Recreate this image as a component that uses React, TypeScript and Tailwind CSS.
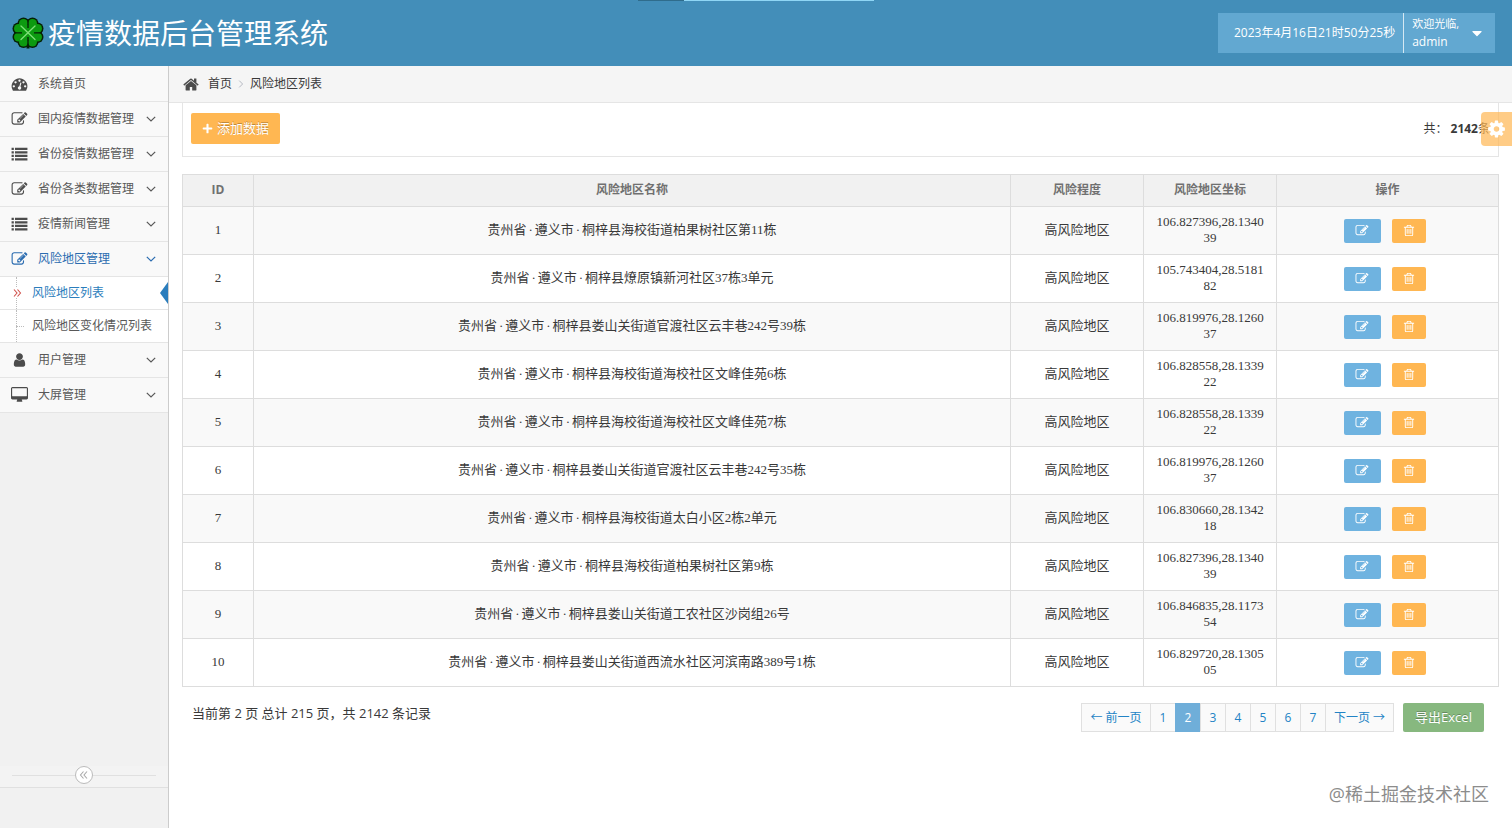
import { Fragment, type ReactNode } from 'react';
import { FaPlus, FaCaretDown } from 'react-icons/fa';
import clsx from 'clsx';

const ICONS = {
    edit: 'M888 1184l116-116-152-152-116 116v56h96v96h56zm440-720q-16-16-33 1l-350 350q-17 17-1 33t33-1l350-350q17-17 1-33zm80 594v190q0 119-84.5 203.5t-203.5 84.5h-832q-119 0-203.5-84.5t-84.5-203.5v-832q0-119 84.5-203.5t203.5-84.5h832q63 0 117 25 15 7 18 23 3 17-9 29l-49 49q-14 14-32 8-23-6-45-6h-832q-66 0-113 47t-47 113v832q0 66 47 113t113 47h832q66 0 113-47t47-113v-126q0-13 9-22l64-64q15-15 35-7t20 29zm-96-738l288 288-672 672h-288v-288zm444 132l-92 92-288-288 92-92q28-28 68-28t68 28l152 152q28 28 28 68t-28 68z',
    trash: 'M704 736v576q0 14-9 23t-23 9h-64q-14 0-23-9t-9-23v-576q0-14 9-23t23-9h64q14 0 23 9t9 23zm256 0v576q0 14-9 23t-23 9h-64q-14 0-23-9t-9-23v-576q0-14 9-23t23-9h64q14 0 23 9t9 23zm256 0v576q0 14-9 23t-23 9h-64q-14 0-23-9t-9-23v-576q0-14 9-23t23-9h64q14 0 23 9t9 23zm128 724v-948h-896v948q0 22 7 40.5t14.5 27 10.5 8.5h832q3 0 10.5-8.5t14.5-27 7-40.5zm-672-1076h448l-48-117q-7-9-17-11h-317q-10 2-17 11zm928 32v64q0 14-9 23t-23 9h-96v948q0 83-47 143.5t-113 60.5h-832q-66 0-113-58.5t-47-141.5v-952h-96q-14 0-23-9t-9-23v-64q0-14 9-23t23-9h309l70-167q15-37 54-63t79-26h320q40 0 79 26t54 63l70 167h309q14 0 23 9t9 23z',
    dashboard: 'M384 1152q0-53-37.5-90.5t-90.5-37.5-90.5 37.5-37.5 90.5 37.5 90.5 90.5 37.5 90.5-37.5 37.5-90.5zm192-448q0-53-37.5-90.5t-90.5-37.5-90.5 37.5-37.5 90.5 37.5 90.5 90.5 37.5 90.5-37.5 37.5-90.5zm428 481l101-382q6-26-7.5-48.5t-38.5-29.5-48 6.5-30 39.5l-101 382q-60 5-107 43.5t-63 98.5q-20 77 20 146t117 89 146-20 89-117q16-60-6-117t-72-91zm660-33q0-53-37.5-90.5t-90.5-37.5-90.5 37.5-37.5 90.5 37.5 90.5 90.5 37.5 90.5-37.5 37.5-90.5zm-640-640q0-53-37.5-90.5t-90.5-37.5-90.5 37.5-37.5 90.5 37.5 90.5 90.5 37.5 90.5-37.5 37.5-90.5zm448 192q0-53-37.5-90.5t-90.5-37.5-90.5 37.5-37.5 90.5 37.5 90.5 90.5 37.5 90.5-37.5 37.5-90.5zm320 448q0 261-141 483-19 29-54 29h-1402q-35 0-54-29-141-221-141-483 0-182 71-348t191-286 286-191 348-71 348 71 286 191 191 286 71 348z',
    list: 'M0 190h256v250h-256zM384 190h1408v250h-1408zM0 590h256v250h-256zM384 590h1408v250h-1408zM0 990h256v250h-256zM384 990h1408v250h-1408zM0 1390h256v250h-256zM384 1390h1408v250h-1408z',
    home: 'M1472 992v480q0 26-19 45t-45 19h-384v-384h-256v384h-384q-26 0-45-19t-19-45v-480q0-1 .5-3t.5-3l575-474 575 474q1 2 1 6zm223-69l-62 74q-8 9-21 11h-3q-13 0-21-7l-692-577-692 577q-12 8-24 7-13-2-21-11l-62-74q-8-10-7-23.5t11-21.5l719-599q32-26 76-26t76 26l244 204v-195q0-14 9-23t23-9h192q14 0 23 9t9 23v408l219 182q10 8 11 21.5t-7 23.5z',
    user: 'M1536 1399q0 109-62.5 187t-150.5 78h-854q-88 0-150.5-78t-62.5-187q0-85 8.5-160.5t31.5-152 58.5-131 94-89 134.5-34.5q131 128 313 128t313-128q76 0 134.5 34.5t94 89 58.5 131 31.5 152 8.5 160.5zm-256-887q0 159-112.5 271.5t-271.5 112.5-271.5-112.5-112.5-271.5 112.5-271.5 271.5-112.5 271.5 112.5 112.5 271.5z',
    desktop: 'M1728 992v-832q0-13-9.5-22.5t-22.5-9.5h-1600q-13 0-22.5 9.5t-9.5 22.5v832q0 13 9.5 22.5t22.5 9.5h1600q13 0 22.5-9.5t9.5-22.5zm128-832v1088q0 66-47 113t-113 47h-544q0 37 16 77.5t32 71 16 43.5q0 26-19 45t-45 19h-512q-26 0-45-19t-19-45q0-14 16-44t32-70 16-78h-544q-66 0-113-47t-47-113v-1088q0-66 47-113t113-47h1600q66 0 113 47t47 113z',
    cog: 'M1152 896q0-106-75-181t-181-75-181 75-75 181 75 181 181 75 181-75 75-181zm512-109v222q0 12-8 23t-20 13l-185 28q-19 54-39 91 35 50 107 138 10 12 10 25t-9 23q-27 37-99 108t-94 71q-12 0-26-9l-138-108q-44 23-91 38-16 136-29 186-7 28-36 28h-222q-14 0-24.5-8.5t-11.5-21.5l-28-184q-49-16-90-37l-141 107q-10 9-25 9-14 0-25-11-126-114-165-168-7-10-7-23 0-12 8-23 15-21 51-66.5t54-70.5q-27-50-41-99l-183-27q-13-2-21-12.5t-8-23.5v-222q0-12 8-23t19-13l186-28q14-46 39-92-40-57-107-138-10-12-10-24 0-10 9-23 26-36 98.5-107.5t94.5-71.5q13 0 26 10l138 107q44-23 91-38 16-136 29-186 7-28 36-28h222q14 0 24.5 8.5t11.5 21.5l28 184q49 16 90 37l142-107q9-9 24-9 13 0 25 10 129 119 165 170 7 8 7 22 0 12-8 23-15 21-51 66.5t-54 70.5q26 50 41 98l183 28q13 2 21 12.5t8 23.5z',
};

type IconName = keyof typeof ICONS;

const Icon = ({ name, className }: { name: IconName; className?: string }) => (
    <svg viewBox="-64 0 1920 1792" fill="currentColor" className={clsx('shrink-0', className)} aria-hidden="true">
        <path d={ICONS[name]} />
    </svg>
);

const Chevron = ({ className }: { className?: string }) => (
    <svg viewBox="0 0 10 10" fill="none" stroke="currentColor" strokeWidth="1.2" className={className} aria-hidden="true">
        <path d="M.8 2.8 5 7l4.2-4.2" />
    </svg>
);

const DoubleAngle = ({ className }: { className?: string }) => (
    <svg viewBox="0 0 10 10" fill="none" stroke="currentColor" strokeWidth="1.1" className={className} aria-hidden="true">
        <path d="M2 1.500 5 5 2 8.500M5.500 1.500 8.500 5 5.500 8.500" />
    </svg>
);

// eight round lobes, outlined, two per leaf
const LOBES = [
    [11.5, 6.5], [20.5, 6.5], [6.5, 11.5], [25.5, 11.5],
    [6.5, 20], [25.5, 20], [11.5, 25], [20.5, 25],
];

const Clover = () => (
    <svg viewBox="0 0 32 32" className="h-8 w-8 shrink-0" aria-hidden="true">
        <g fill="#062006">
            {LOBES.map(([x, y]) => <circle key={`${x}-${y}`} cx={x} cy={y} r="6" />)}
            <path d="M14.500 22h3v9.500h-3z" />
        </g>
        <g fill="#0c9a10">
            {LOBES.map(([x, y]) => <circle key={`${x}-${y}`} cx={x} cy={y} r="4.500" />)}
            <path d="M8 8h16v15H8z" />
        </g>
        <path d="M16 3v8M16 20v11M2 15.800h8M22 15.800h8" stroke="#062006" strokeWidth="1.300" />
        <path d="M9 9l14 13.500M23 9L9 22.500" stroke="#7fe07a" strokeWidth="1.300" strokeLinecap="round" />
    </svg>
);

const menu: { label: string; icon: IconName; plain?: boolean; children?: string[] }[] = [
    { label: '系统首页', icon: 'dashboard', plain: true },
    { label: '国内疫情数据管理', icon: 'edit' },
    { label: '省份疫情数据管理', icon: 'list' },
    { label: '省份各类数据管理', icon: 'edit' },
    { label: '疫情新闻管理', icon: 'list' },
    { label: '风险地区管理', icon: 'edit', children: ['风险地区列表', '风险地区变化情况列表'] },
    { label: '用户管理', icon: 'user' },
    { label: '大屏管理', icon: 'desktop' },
];

const rows = [
    { id: 1, name: '贵州省·遵义市·桐梓县海校街道柏果树社区第11栋', pos: '106.827396,28.134039' },
    { id: 2, name: '贵州省·遵义市·桐梓县燎原镇新河社区37栋3单元', pos: '105.743404,28.518182' },
    { id: 3, name: '贵州省·遵义市·桐梓县娄山关街道官渡社区云丰巷242号39栋', pos: '106.819976,28.126037' },
    { id: 4, name: '贵州省·遵义市·桐梓县海校街道海校社区文峰佳苑6栋', pos: '106.828558,28.133922' },
    { id: 5, name: '贵州省·遵义市·桐梓县海校街道海校社区文峰佳苑7栋', pos: '106.828558,28.133922' },
    { id: 6, name: '贵州省·遵义市·桐梓县娄山关街道官渡社区云丰巷242号35栋', pos: '106.819976,28.126037' },
    { id: 7, name: '贵州省·遵义市·桐梓县海校街道太白小区2栋2单元', pos: '106.830660,28.134218' },
    { id: 8, name: '贵州省·遵义市·桐梓县海校街道柏果树社区第9栋', pos: '106.827396,28.134039' },
    { id: 9, name: '贵州省·遵义市·桐梓县娄山关街道工农社区沙岗组26号', pos: '106.846835,28.117354' },
    { id: 10, name: '贵州省·遵义市·桐梓县娄山关街道西流水社区河滨南路389号1栋', pos: '106.829720,28.130505' },
];

const Header = () => (
    <header className="relative flex h-[66px] items-center justify-between bg-[#438eb9] pr-[17px] pl-3 text-white">
        <div className="absolute top-0 left-[638px] flex h-px w-[236px]">
            <span className="w-[46px] bg-[#2f6c8c]" />
            <span className="flex-1 bg-[#8fd6f5]" />
        </div>
        <a href="#" className="flex items-center gap-1">
            <Clover />
            <h1 className="text-[28px] leading-8">疫情数据后台管理系统</h1>
        </a>
        <div className="flex h-10 bg-[#62a8d1]">
            <div className="flex items-center border-r border-[#d5e8f3] pr-2 pl-4 text-xs">2023年4月16日21时50分25秒</div>
            <button className="flex items-center justify-between gap-2.5 pr-2.5 pl-2 text-left text-xs">
                <span>
                    <small className="block text-[11px] leading-[18px]">欢迎光临,</small>
                    <span className="block leading-[18px]">admin</span>
                </span>
                <FaCaretDown size={16} />
            </button>
        </div>
    </header>
);

const Sidebar = () => (
    <aside className="flex w-[169px] shrink-0 flex-col border-r border-[#ccc] bg-[#f1f1f1] text-xs text-[#585858]">
        <nav className="border-t border-[#f9f9f9]">
            <ul>
                {menu.map((item) => (
                    <li key={item.label}>
                        <a
                            href="#"
                            className={clsx(
                                'flex h-[35px] items-center border-b border-[#e5e5e5] bg-[#f9f9f9] pr-3 pl-[11px]',
                                item.children && 'text-[#2b6cb0]',
                            )}
                        >
                            <Icon name={item.icon} className={clsx('mr-2.5 h-4 w-[17px]', !item.children && 'text-[#4c4c4c]')} />
                            <span className="flex-1">{item.label}</span>
                            {!item.plain && <Chevron className="h-2.5 w-2.5" />}
                        </a>
                        {item.children && (
                            <ul className="bg-white">
                                {item.children.map((child, i) => (
                                    <li key={child} className="border-b border-[#e5e5e5]">
                                        <a
                                            href="#"
                                            className={clsx('relative flex h-8 items-center pl-8', i === 0 && 'text-[#2b7dbc]')}
                                        >
                                            <span className="absolute inset-y-0 left-4 border-l border-dotted border-[#bcbcbc]" />
                                            {i === 0 ? (
                                                <>
                                                    <DoubleAngle className="absolute left-3 h-2.5 w-2.5 bg-white text-[#d0504a]" />
                                                    <svg viewBox="0 0 8 22" className="absolute right-0 h-[22px] w-2 text-[#2b7dbc]" aria-hidden="true">
                                                        <path d="M8 0v22L0 11z" fill="currentColor" />
                                                    </svg>
                                                </>
                                            ) : (
                                                <span className="absolute left-4 w-2 border-t border-dotted border-[#bcbcbc]" />
                                            )}
                                            {child}
                                        </a>
                                    </li>
                                ))}
                            </ul>
                        )}
                    </li>
                ))}
            </ul>
        </nav>
        <div className="mt-auto mb-10 flex items-center border-b border-[#e0e0e0] bg-[#f3f3f3] px-3 pb-[3px]">
            <span className="h-px flex-1 bg-[#e0e0e0]" />
            <button
                aria-label="收起菜单"
                className="flex h-[18px] w-[18px] items-center justify-center rounded-full border border-[#bbb] bg-white text-[#aaa]"
            >
                <DoubleAngle className="h-2.5 w-2.5 rotate-180" />
            </button>
            <span className="h-px flex-1 bg-[#e0e0e0]" />
        </div>
    </aside>
);

const Breadcrumb = () => (
    <div className="flex h-[37px] items-center border-b border-[#e5e5e5] bg-[#f5f5f5] pl-[13px] text-xs text-[#393939]">
        <Icon name="home" className="mr-2 h-[17px] w-[18px] text-[#4c4c4c]" />
        <a href="#">首页</a>
        <Chevron className="mx-[5px] h-2 w-2 -rotate-90 text-[#b2b6bf]" />
        <span>风险地区列表</span>
    </div>
);

const Th = ({ children, className }: { children: ReactNode; className?: string }) => (
    <th className={clsx('h-8 border border-[#ddd] pb-0.5 font-bold', className)}>{children}</th>
);

const Td = ({ children, className }: { children: ReactNode; className?: string }) => (
    <td className={clsx('border border-[#ddd]', className)}>{children}</td>
);

const AreaName = ({ name }: { name: string }) => (
    <>
        {name.split('·').map((part, i) => (
            <Fragment key={i}>
                {i > 0 && <span className="px-0.5">·</span>}
                {part}
            </Fragment>
        ))}
    </>
);

const RiskTable = () => (
    <table className="mt-[17px] w-full table-fixed border-collapse text-center">
        <thead className="bg-[#f1f1f1] text-xs text-[#707070]">
            <tr>
                <Th className="w-[71px]">ID</Th>
                <Th>风险地区名称</Th>
                <Th className="w-[133px]">风险程度</Th>
                <Th className="w-[133px]">风险地区坐标</Th>
                <Th className="w-[222px]">操作</Th>
            </tr>
        </thead>
        <tbody className="font-['Liberation_Serif','Noto_Sans_CJK_SC',serif] text-[13px] leading-4 text-[#393939]">
            {rows.map((row) => (
                <tr key={row.id} className="h-12 odd:bg-[#f9f9f9]">
                    <Td className="pb-0.5">{row.id}</Td>
                    <Td className="px-2 pb-0.5">
                        <AreaName name={row.name} />
                    </Td>
                    <Td className="pb-0.5">高风险地区</Td>
                    <Td className="px-[11px] pb-0.5 break-all">{row.pos}</Td>
                    <Td className="pr-1.5">
                        <div className="flex justify-center gap-[11px] text-white">
                            <button aria-label="编辑" className="flex h-6 w-[37px] items-center justify-center rounded-xs bg-[#6fb3e0]">
                                <Icon name="edit" className="h-[13px] w-[14px]" />
                            </button>
                            <button aria-label="删除" className="flex h-6 w-[34px] items-center justify-center rounded-xs bg-[#ffb752]">
                                <Icon name="trash" className="h-[13px] w-[14px]" />
                            </button>
                        </div>
                    </Td>
                </tr>
            ))}
        </tbody>
    </table>
);

const Pagination = () => (
    <div className="flex items-start justify-between pt-4 pr-[15px] pl-2.5">
        <p className="text-[13px] leading-5 text-[#393939]">当前第 2 页 总计 215 页，共 2142 条记录</p>
        <div className="flex items-center gap-[9px]">
            <nav className="flex h-[29px] border border-[#e0e0e0] bg-[#fafafa] text-xs text-[#2283c5]">
                <a href="#" className="flex w-[68px] items-center justify-center">← 前一页</a>
                {[1, 2, 3, 4, 5, 6, 7].map((page) => (
                    <a
                        key={page}
                        href="#"
                        className={clsx(
                            'flex w-[25px] items-center justify-center border-l',
                            page === 2 ? '-my-px border-[#6faed9] bg-[#6faed9] text-white' : 'border-[#e0e0e0]',
                        )}
                    >
                        {page}
                    </a>
                ))}
                <a href="#" className="flex w-[68px] items-center justify-center border-l border-[#e0e0e0]">下一页 →</a>
            </nav>
            <button className="h-[29px] w-[81px] rounded-xs bg-[#87b87f] text-[13px] text-white [text-shadow:0_-1px_0_rgba(0,0,0,0.25)]">
                导出Excel
            </button>
        </div>
    </div>
);

export default function App() {
    return (
        <div className="relative flex min-h-screen flex-col bg-white font-['Open_Sans','Noto_Sans_CJK_SC',sans-serif]">
            <Header />
            <div className="flex flex-1">
                <Sidebar />
                <main className="min-w-0 flex-1">
                    <Breadcrumb />
                    <div className="relative px-[13px]">
                        <div className="flex h-[54px] items-center justify-between border border-t-0 border-[#e5e5e5] px-2 pb-0.5">
                            <button className="flex h-[31px] w-[89px] items-center justify-center gap-1 rounded-xs bg-[#ffb752] text-[13px] text-white [text-shadow:0_-1px_0_rgba(0,0,0,0.25)]">
                                <FaPlus size={11} />
                                添加数据
                            </button>
                            <p className="text-xs text-[#393939]">
                                共： <b>2142</b>条
                            </p>
                        </div>
                        <button
                            aria-label="设置"
                            className="absolute top-[9px] right-0 flex h-[34px] w-[31px] items-center justify-center rounded-l bg-[#ffb752]/70 text-white"
                        >
                            <Icon name="cog" className="h-5 w-[21px]" />
                        </button>
                        <RiskTable />
                        <Pagination />
                    </div>
                </main>
            </div>
            <div className="absolute right-[23px] bottom-5 text-lg text-[#8c8c8c]">@稀土掘金技术社区</div>
        </div>
    );
}
